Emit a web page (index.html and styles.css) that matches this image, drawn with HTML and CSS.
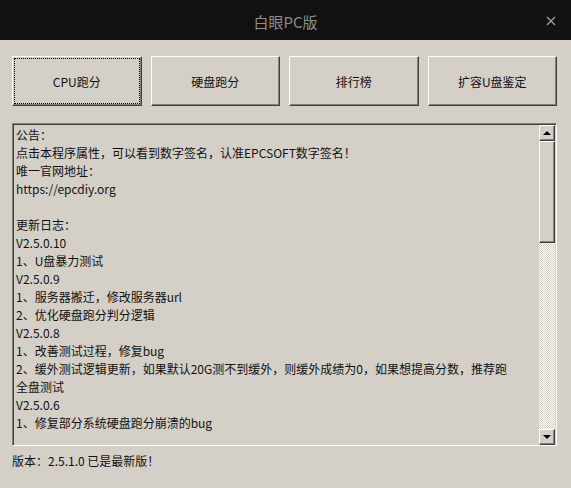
FILE: index.html
```html
<!DOCTYPE html>
<html lang="zh-CN">
<head>
    <meta charset="UTF-8">
    <title>白眼PC版</title>
    <link rel="stylesheet" href="styles.css">
</head>
<body>
    <div class="titlebar">
        <span class="title">白眼PC版</span>
        <svg class="close" width="10" height="10" viewBox="0 0 10 10">
            <path d="M1 1 L9 9 M9 1 L1 9" stroke="#a0a0a0" stroke-width="1.3" fill="none"/>
        </svg>
    </div>
    <div class="main">
        <div class="buttons">
            <button class="btn focused">CPU跑分</button>
            <button class="btn">硬盘跑分</button>
            <button class="btn">排行榜</button>
            <button class="btn">扩容U盘鉴定</button>
        </div>
        <div class="textbox">
            <div class="content">
                <div>公告：</div>
                <div>点击本程序属性，可以看到数字签名，认准EPCSOFT数字签名！</div>
                <div>唯一官网地址：</div>
                <div>https://epcdiy.org</div>
                <div>&nbsp;</div>
                <div>更新日志：</div>
                <div>V2.5.0.10</div>
                <div>1、U盘暴力测试</div>
                <div>V2.5.0.9</div>
                <div>1、服务器搬迁，修改服务器url</div>
                <div>2、优化硬盘跑分判分逻辑</div>
                <div>V2.5.0.8</div>
                <div>1、改善测试过程，修复bug</div>
                <div>2、缓外测试逻辑更新，如果默认20G测不到缓外，则缓外成绩为0，如果想提高分数，推荐跑</div>
                <div>全盘测试</div>
                <div>V2.5.0.6</div>
                <div>1、修复部分系统硬盘跑分崩溃的bug</div>
            </div>
            <div class="scrollbar">
                <div class="sb-btn"><span class="arrow up"></span></div>
                <div class="sb-thumb"></div>
                <div class="sb-track"></div>
                <div class="sb-btn"><span class="arrow down"></span></div>
            </div>
        </div>
        <div class="status">版本：2.5.1.0 已是最新版！</div>
    </div>
</body>
</html>
```

FILE: styles.css
```css
body {
    margin: 0;
    background-color: #d4d0c8;
    font-family: "Noto Sans CJK SC", "Noto Sans", sans-serif;
    color: #111111;
    font-size: 12px;
}

.titlebar {
    height: 40px;
    background-color: #111111;
    display: flex;
    align-items: center;
    justify-content: center;
    position: relative;
}

.title {
    color: #8e8e8e;
    font-size: 15px;
    margin-top: 2px;
}

.close {
    position: absolute;
    right: 15px;
    top: 16px;
}

.main {
    padding: 16px 14px 0 12px;
}

.buttons {
    display: flex;
    gap: 9px;
}

.btn {
    flex: 1;
    height: 50px;
    background-color: #d4d0c8;
    border: 1px solid;
    border-color: #ffffff #404040 #404040 #ffffff;
    box-shadow: inset -1px -1px #808080;
    font-family: inherit;
    font-size: 12px;
    color: #111111;
    padding: 0;
}

.btn.focused {
    outline: 1px dotted #000000;
    outline-offset: -3px;
}

.textbox {
    margin-top: 17px;
    height: 321px;
    border: 1px solid;
    border-color: #808080 #ffffff #ffffff #808080;
    box-shadow: inset 1px 1px #404040;
    display: flex;
}

.content {
    flex: 1;
    padding: 2px 0 0 3px;
    line-height: 18px;
    overflow: hidden;
}

.scrollbar {
    width: 16px;
    margin: 1px 1px 0 0;
    display: flex;
    flex-direction: column;
}

.sb-btn,
.sb-thumb {
    box-sizing: border-box;
    background-color: #d4d0c8;
    border: 1px solid;
    border-color: #ffffff #404040 #404040 #ffffff;
    box-shadow: inset -1px -1px #808080;
}

.sb-btn {
    height: 16px;
    display: flex;
    align-items: center;
    justify-content: center;
}

.sb-thumb {
    height: 102px;
}

.sb-track {
    flex: 1;
    background-image: conic-gradient(#ffffff 25%, #d4d0c8 0 50%, #ffffff 0 75%, #d4d0c8 0);
    background-size: 2px 2px;
}

.arrow {
    width: 0;
    height: 0;
    border-left: 4px solid transparent;
    border-right: 4px solid transparent;
}

.arrow.up {
    border-bottom: 4px solid #000000;
}

.arrow.down {
    border-top: 4px solid #000000;
}

.status {
    margin-top: 6px;
    line-height: 18px;
}
```
